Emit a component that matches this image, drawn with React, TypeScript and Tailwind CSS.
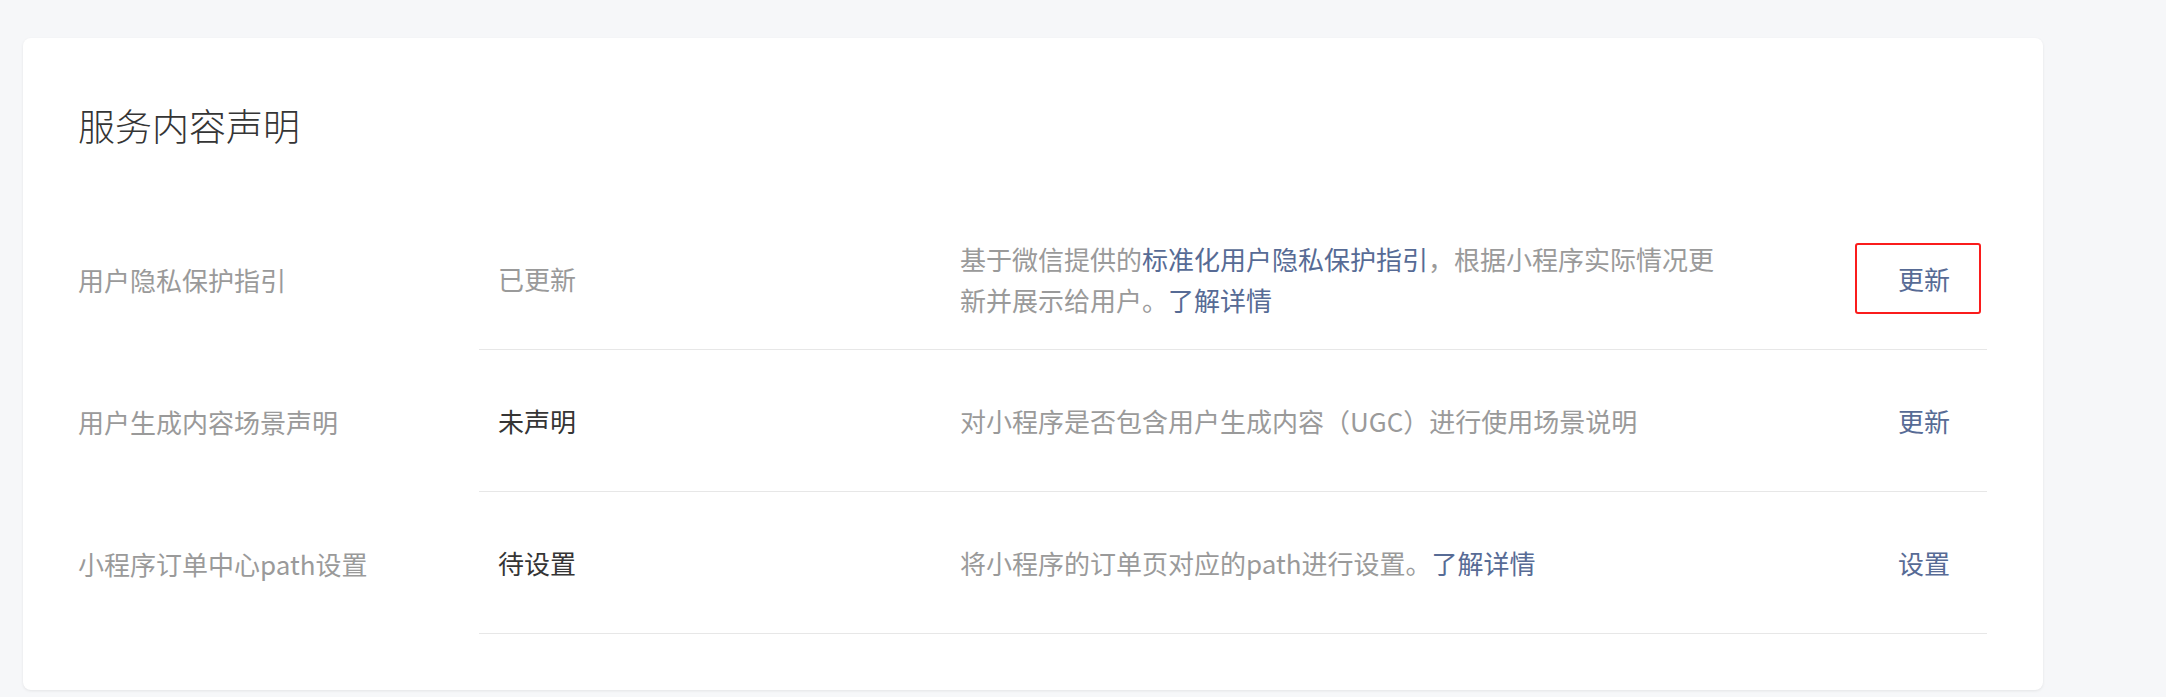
import React from "react";

const font = { fontFamily: '"Noto Sans CJK SC", "Noto Sans", sans-serif' };

type Row = {
  label: string;
  status: string;
  statusMuted?: boolean;
  desc: React.ReactNode;
  action: string;
  highlight?: boolean;
};

const Link = ({ children }: { children: React.ReactNode }) => (
  <a className="text-[#576b95] cursor-pointer">{children}</a>
);

const rows: Row[] = [
  {
    label: "用户隐私保护指引",
    status: "已更新",
    statusMuted: true,
    desc: (
      <>
        基于微信提供的<Link>标准化用户隐私保护指引</Link>，根据小程序实际情况更新并展示给用户。<Link>了解详情</Link>
      </>
    ),
    action: "更新",
    highlight: true,
  },
  {
    label: "用户生成内容场景声明",
    status: "未声明",
    desc: <>对小程序是否包含用户生成内容（UGC）进行使用场景说明</>,
    action: "更新",
  },
  {
    label: "小程序订单中心path设置",
    status: "待设置",
    desc: (
      <>
        将小程序的订单页对应的path进行设置。<Link>了解详情</Link>
      </>
    ),
    action: "设置",
  },
];

export default function App() {
  return (
    <div className="w-[2166px] h-[697px] bg-[#f6f7f9] overflow-hidden" style={font}>
      <div className="ml-[23px] mt-[38px] w-[2020px] h-[652px] bg-white rounded-[8px] shadow-[0_1px_3px_rgba(0,0,0,0.08)] pl-[55px] pr-[56px] pt-[61px]">
        <h2 className="text-[37px] leading-[52px] text-[#353535] font-light">服务内容声明</h2>
        <div className="mt-[57px]">
          {rows.map((r) => (
            <div key={r.label} className="flex h-[142px]">
              <div className="w-[401px] flex items-center text-[26px] text-[#9a9a9a]">{r.label}</div>
              <div className="flex-1 flex items-center border-b border-[#e7e7e7]">
                <div
                  className={
                    "w-[481px] pl-[19px] text-[26px] " +
                    (r.statusMuted ? "text-[#9a9a9a]" : "text-[#353535]")
                  }
                >
                  {r.status}
                </div>
                <div className="w-[760px] text-[26px] leading-[41px] text-[#9a9a9a]">{r.desc}</div>
                <div className="flex-1 flex justify-end">
                  <div
                    className={
                      "w-[126px] h-[71px] mr-[6px] rounded-[3px] border-[2.5px] flex items-center justify-end pr-[29px] text-[26px] text-[#576b95] cursor-pointer " +
                      (r.highlight ? "border-[#fa1c1c]" : "border-transparent")
                    }
                  >
                    {r.action}
                  </div>
                </div>
              </div>
            </div>
          ))}
        </div>
      </div>
    </div>
  );
}
